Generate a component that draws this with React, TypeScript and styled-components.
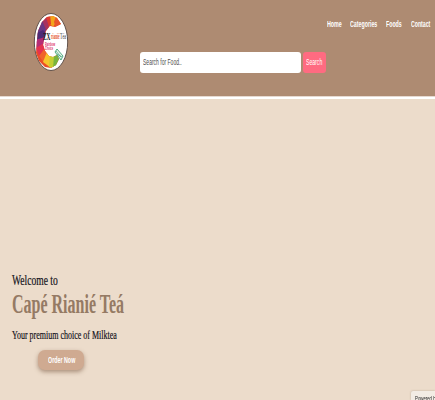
import React from 'react';
import styled, { createGlobalStyle } from 'styled-components';

const GlobalStyle = createGlobalStyle`
  * { box-sizing: border-box; }
  body { margin: 0; overflow: hidden; background: #ecdccb; font-family: "Liberation Sans", Arial, sans-serif; }
  h1, p { margin: 0; font-weight: 400; }
`;

const Page = styled.div`
  height: 400px;
  display: flex;
  flex-direction: column;
  overflow: hidden;
`;

const Header = styled.header`
  height: 99px;
  flex: none;
  display: flex;
  background: #ae8b72;
  border-bottom: 2px solid #fff;
  box-shadow: inset 0 -1px 0 #e6d9d0;
`;

const Logo = styled.svg`
  display: block;
  flex: none;
  width: 36px;
  height: 60px;
  margin: 12px 0 0 33px;
`;

const HeaderBody = styled.div`
  flex: 1;
  display: flex;
  flex-direction: column;
`;

const Nav = styled.nav`
  display: flex;
  justify-content: flex-end;
  gap: 9px;
  margin: 18px 5px 0 0;
  height: 12px;
`;

const NavLink = styled.a`
  color: #fff;
  font-size: 8.8px;
  font-weight: 700;
  line-height: 12px;
`;

const SearchForm = styled.div`
  display: flex;
  gap: 2px;
  margin: 22px 0 0 71px;
  height: 21px;
`;

const SearchField = styled.div`
  width: 161px;
  padding-left: 3px;
  border-radius: 3px;
  background: #fff;
  color: #4c4c4c;
  font-size: 9px;
  line-height: 21px;
`;

const SearchButton = styled.div`
  width: 23px;
  padding-left: 3px;
  border-radius: 3px;
  background: #ff6b81;
  color: #fff;
  font-size: 9px;
  line-height: 21px;
`;

const Hero = styled.main`
  flex: 1;
  padding: 171px 0 0 12px;
  font-family: "Liberation Serif", "Times New Roman", serif;
`;

const Welcome = styled.p`
  height: 20px;
  color: #111018;
  font-size: 15px;
  line-height: 20px;
  -webkit-text-stroke: 0.2px #111018;
`;

const Title = styled.h1`
  height: 29px;
  color: #957a64;
  font-size: 27px;
  font-weight: 700;
  line-height: 28px;
`;

const Tagline = styled.p`
  height: 18px;
  margin-top: 7px;
  color: #111018;
  font-size: 13px;
  line-height: 18px;
  -webkit-text-stroke: 0.2px #111018;
`;

const OrderButton = styled.div`
  width: 46px;
  height: 20px;
  margin: 6px 0 0 26px;
  padding-left: 10px;
  border-radius: 7px;
  background: #cfaa91;
  box-shadow: 0 2px 4px rgba(105, 70, 45, 0.5);
  color: #fff;
  font: 700 8.5px/20px "Liberation Sans", Arial, sans-serif;
`;

const HostBadge = styled.aside`
  position: fixed;
  right: 0;
  bottom: 0;
  width: 24px;
  height: 9px;
  padding: 3px 0 0 4px;
  overflow: hidden;
  border-radius: 2px 0 0 0;
  background: #f3ece4;
  box-shadow: 0 0 2px rgba(90, 70, 50, 0.35);
  color: #222;
  font-size: 7.5px;
  line-height: 10px;
`;

const Slot = styled.span<{ $width: number }>`
  display: block;
  width: ${(p) => p.$width}px;
  white-space: nowrap;
`;

const Glyphs = styled.span`
  display: inline-block;
  transform-origin: 0 50%;
`;

/* Condenses a line of text to the given width. */
function Condensed({ width, children }: { width: number; children: string }) {
  const ref = React.useRef<HTMLSpanElement>(null);
  const [scale, setScale] = React.useState(0.64);
  React.useLayoutEffect(() => {
    if (ref.current) setScale(width / ref.current.offsetWidth);
  }, [width, children]);
  return (
    <Slot $width={width}>
      <Glyphs ref={ref} style={{ transform: `scaleX(${scale})` }}>{children}</Glyphs>
    </Slot>
  );
}

const links = [
  { label: 'Home', width: 14.5 },
  { label: 'Categories', width: 27 },
  { label: 'Foods', width: 15.5 },
  { label: 'Contact', width: 19.5 },
];

function CafeLogo() {
  return (
    <Logo viewBox="0 0 36 60">
      <defs>
        <clipPath id="ring">
          <path d="M4 28L5 19 9 10 14 5l6-1 4 2 4 6-6 3-5-1-4 5-2 8-1 6 2 6 4 5 4 1 4-2 2 4-3 6-5 3-6-1-6-6-3-8z" />
        </clipPath>
      </defs>
      <ellipse cx="18" cy="30" rx="16.7" ry="28.5" fill="#fff" stroke="#54443d" strokeWidth="0.9" />
      <g clipPath="url(#ring)">
        <path fill="#e94e27" d="M0 0h36v60H0z" />
        <path fill="#f2a51b" d="M18 0h7l-1 9-4 6-4-4z" />
        <path fill="#e9562b" d="M23 4l8 8-8 5-2-7z" />
        <path fill="#df3a2c" d="M11 3l6-1 1 10-5 4z" />
        <path fill="#a8315f" d="M8 9l5-4 3 10-5 6z" />
        <path fill="#6a3684" d="M3 15l6-7 4 10-4 7-6-2z" />
        <path fill="#4c2c76" d="M2 22l8-4 4 4-3 7-9 2z" />
        <path fill="#b42d76" d="M2 28l10-3v9L4 39z" />
        <path fill="#e43250" d="M3 36l8-5 3 7-7 8z" />
        <path fill="#f0642c" d="M6 44l6-8 4 6-4 10z" />
        <path fill="#f6c52d" d="M10 50l4-10 4 3v13z" />
        <path fill="#c4cf32" d="M16 55l1-12 5-1 1 14z" />
        <path fill="#78b53e" d="M20 56l1-12 6-3 1 10z" />
      </g>
      <path d="M24 37l6 7-2 4-6-8z" fill="#e5f4e9" stroke="#2a9869" strokeWidth="0.8" />
      <path d="M23 39l5 6m-4-3 5 3" stroke="#2a9869" strokeWidth="0.6" />
      <text x="10" y="28" textLength="7.5" lengthAdjust="spacingAndGlyphs" fontFamily="Liberation Serif, serif" fontWeight="700" fontSize="11" fill="#171717">ZX</text>
      <text x="18" y="26.5" textLength="8.5" lengthAdjust="spacingAndGlyphs" fontFamily="Liberation Serif, serif" fontWeight="700" fontSize="8" fill="#e4572e">rianié</text>
      <text x="27" y="26.5" textLength="6" lengthAdjust="spacingAndGlyphs" fontFamily="Liberation Serif, serif" fontSize="8" fill="#333">Téa</text>
      <text x="12" y="34" textLength="10" lengthAdjust="spacingAndGlyphs" fontFamily="Liberation Sans, sans-serif" fontWeight="700" fontSize="4.5" fill="#dc2a68">Rainbow</text>
      <text x="12" y="38" textLength="8" lengthAdjust="spacingAndGlyphs" fontFamily="Liberation Sans, sans-serif" fontWeight="700" fontSize="4.5" fill="#dc2a68">Choice</text>
    </Logo>
  );
}

export default function App() {
  return (
    <>
      <GlobalStyle />
      <Page>
        <Header>
          <CafeLogo />
          <HeaderBody>
            <Nav>
              {links.map((l) => (
                <NavLink key={l.label}><Condensed width={l.width}>{l.label}</Condensed></NavLink>
              ))}
            </Nav>
            <SearchForm>
              <SearchField><Condensed width={39}>Search for Food..</Condensed></SearchField>
              <SearchButton><Condensed width={16.5}>Search</Condensed></SearchButton>
            </SearchForm>
          </HeaderBody>
        </Header>
        <Hero>
          <Welcome><Condensed width={46}>Welcome to</Condensed></Welcome>
          <Title><Condensed width={112}>Capé Rianié Teá</Condensed></Title>
          <Tagline><Condensed width={105}>Your premium choice of Milktea</Condensed></Tagline>
          <OrderButton><Condensed width={27}>Order Now</Condensed></OrderButton>
        </Hero>
        <HostBadge><Condensed width={23}>Powered by</Condensed></HostBadge>
      </Page>
    </>
  );
}
